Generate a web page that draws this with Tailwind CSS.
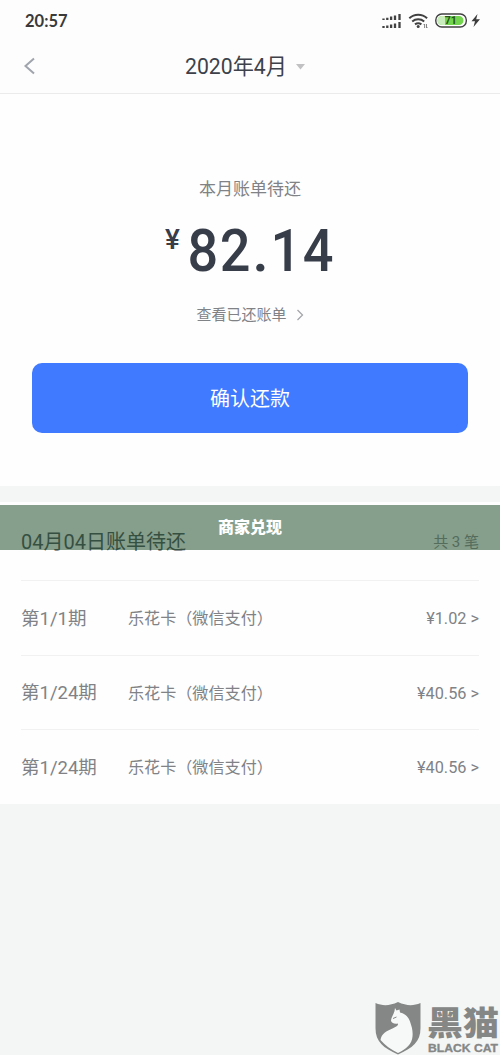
<!DOCTYPE html>
<html lang="zh-CN">
<head>
<meta charset="utf-8">
<title>账单</title>
<script src="https://cdn.jsdelivr.net/npm/@tailwindcss/browser@4"></script>
</head>
<body class="bg-[#f4f5f5] font-['Roboto','Noto_Sans_CJK_SC',sans-serif] text-[#808286]">
<div class="relative flex h-[1055px] w-[500px] flex-col overflow-hidden">
  <header class="h-[94px] shrink-0 border-b border-[#ebebec] bg-[#fdfdfd]">
    <div class="flex h-[40px] items-center justify-between pt-[2px] pr-[19px] pl-[25px]">
      <span class="font-['Lato'] text-[16.5px] leading-none font-bold text-[#3a3a3a]">20:57</span>
      <svg width="100" height="20" viewBox="381 11 100 20" fill="none">
        <path d="M383.500 20v-1.500M387.300 20v-2.300M391.100 20v-3.500M395 20v-4.500M399.500 20v-6M383.500 28v-2M387.300 28v-2.500M391.100 28v-3.500M395 28v-4.500M399.500 28v-6" stroke="#414141" stroke-width="2.300"/>
        <g stroke="#414141" stroke-width="2"><path d="M409.300 18.200c5-4.700 12.800-4.700 17.800 0M412.200 21.400c3.500-3 8.500-3 12 0M415 24.400c2-1.500 4.400-1.500 6.400 0"/></g>
        <circle cx="418.200" cy="26.400" r="1.500" fill="#414141"/>
        <path d="M424.600 28v-4l-1 1M426.500 24v4l1-1" stroke="#777" stroke-width=".9"/>
        <rect x="435.800" y="14" width="30.500" height="13" rx="6" fill="#fff" stroke="#414141" stroke-width="1.400"/>
        <path d="M442 16h17a4.500 4.500 0 0 1 0 9h-17a4.500 4.500 0 0 1 0-9Z" fill="#73d54d"/>
        <path d="M442 16h3v9h-3a4.500 4.500 0 0 1 0-9Z" fill="#c9edbd"/>
        <text x="450.700" y="24.300" text-anchor="middle" font-family="Roboto" font-size="10.500" font-weight="700" fill="#285020">71</text>
        <path d="M477.500 14l-6 7.200h3.500l-1.500 5.800 6.500-7.800h-3.800Z" fill="#3d3d3d"/>
      </svg>
    </div>
    <div class="flex h-[53px] items-center">
      <svg class="mb-[2px] ml-[23px]" width="12" height="18" viewBox="0 0 12 18" fill="none"><path d="M11 1.500L2.500 9l8.500 7.500" stroke="#a0a4ad" stroke-width="2"/></svg>
      <span class="ml-[150px] w-[103px] text-[21.2px] leading-none whitespace-nowrap text-[#3d414a]">2020年4月</span>
      <svg class="ml-[8px]" width="10" height="6" viewBox="0 0 10 6"><path d="M0 0h9L4.500 5.500Z" fill="#c1c1c3"/></svg>
    </div>
  </header>

  <main class="flex h-[392px] shrink-0 flex-col items-center bg-[#fefefe] px-8">
    <p class="mt-[83px] text-[17px] leading-[24px] text-[#808286]">本月账单待还</p>
    <div class="mt-[18px] flex h-[64px] w-[170px] items-start text-[#373d49]">
      <span class="w-[23px] pt-[7px] text-[28px] leading-[27px] font-medium">¥</span>
      <span class="flex text-center text-[60px] leading-[64px] font-medium">
        <span class="w-[32px] scale-x-90">8</span><span class="w-[34px] scale-x-90">2</span><span class="w-[17px]">.</span><span class="w-[32px] scale-x-90">1</span><span class="w-[34px] scale-x-90">4</span>
      </span>
    </div>
    <div class="mt-[18px] flex h-[28px] items-center text-[15px] text-[#808286]">
      <span>查看已还账单</span>
      <svg class="ml-[9px]" width="8" height="12" viewBox="0 0 8 12" fill="none"><path d="M1.500 1l5 5-5 5" stroke="#a4a6a9" stroke-width="1.300"/></svg>
    </div>
    <button class="mt-[34px] h-[70px] w-full rounded-[10px] bg-[#407aff] pt-[2px] text-[20px] text-white">确认还款</button>
  </main>

  <section class="mt-[16px] h-[302px] shrink-0 bg-[#fefefe] px-[21px]">
    <div class="flex h-[79px] items-center justify-between border-b border-[#f1f1f2] pt-[2px]">
      <h2 class="text-[20px] text-[#353b44]">04月04日账单待还</h2>
      <span class="text-[15px] text-[#808286]">共 3 笔</span>
    </div>
    <div class="flex h-[75px] items-center border-b border-[#f1f1f2] pt-[3px]">
      <span class="w-[107px] text-[18.5px]">第1/1期</span><span class="text-[16.1px]">乐花卡（微信支付）</span><span class="ml-auto text-[16.3px]">¥1.02 &gt;</span>
    </div>
    <div class="flex h-[74px] items-center border-b border-[#f1f1f2] pt-[3px]">
      <span class="w-[107px] text-[18.5px]">第1/24期</span><span class="text-[16.1px]">乐花卡（微信支付）</span><span class="ml-auto text-[16.3px]">¥40.56 &gt;</span>
    </div>
    <div class="flex h-[74px] items-center pt-[3px]">
      <span class="w-[107px] text-[18.5px]">第1/24期</span><span class="text-[16.1px]">乐花卡（微信支付）</span><span class="ml-auto text-[16.3px]">¥40.56 &gt;</span>
    </div>
  </section>

  <footer class="mt-auto flex h-[55px] justify-end">
    <svg width="126" height="55" viewBox="374 1000 126 55">
      <path d="M375.500 1003c7 3 14 3 22.500-1 8.500 4 15.500 4 22.500 1v25c0 14-8 20-22.500 26.500C383.500 1048 375.500 1042 375.500 1028Z" fill="#858787"/>
      <path d="M395 1008l1.500 2.500 3-1 .5 3c5 1 8.500 4.500 10 9 2 6 3 9 2.500 15-.6 7.500-6 12.500-14.500 16.500-7-3.500-13-7.500-17.500-13 1-6.500 6-9 12-11.500 4-1.600 6-3 5.500-5-3.500.7-7-.5-7-3 .3-4 3.500-6.500 4-12.500Z" fill="#f7f8f8"/>
      <path d="M393 1018.500l3.500-1.500" stroke="#858787" stroke-width="1"/>
      <text x="427" y="1034.500" font-family="Noto Sans CJK SC" font-weight="900" font-size="33" textLength="72" lengthAdjust="spacingAndGlyphs" fill="#858787">黑猫</text>
      <text x="428" y="1051.500" font-family="Liberation Sans" font-weight="700" font-size="10.500" textLength="70" lengthAdjust="spacingAndGlyphs" fill="#858787" stroke="#858787" stroke-width=".3">BLACK CAT</text>
    </svg>
  </footer>

  <div class="absolute top-[505px] left-0 flex h-[45px] w-full items-center justify-center bg-[#355e3f]/60 pt-px text-[16px] font-black text-white">商家兑现</div>
</div>
</body>
</html>
